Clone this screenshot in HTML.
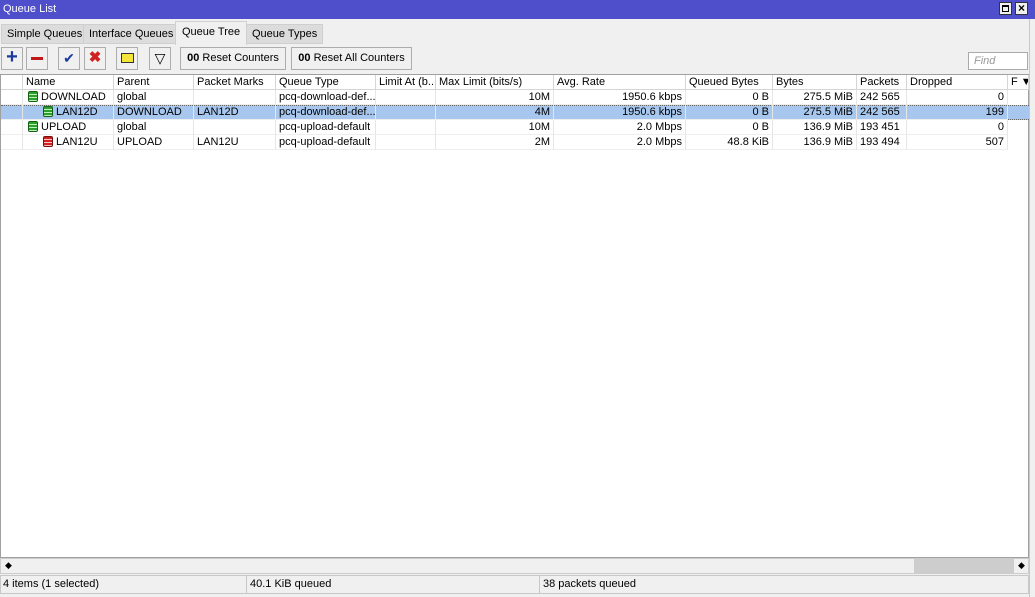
<!DOCTYPE html><html><head><style>
*{margin:0;padding:0;box-sizing:border-box}
body{width:1035px;height:597px;background:#f0f0f0;font-family:"Liberation Sans",sans-serif;font-size:11px;color:#000;position:relative;overflow:hidden}
.a{position:absolute}
.title{left:0;top:0;width:1035px;height:19px;background:#4f4fcb;color:#fff;font-size:11px;padding:3px 0 0 3px}
.wb{top:2px;width:13px;height:13px;background:#f0f0f0;border:1px solid #333}
.tab{top:24px;height:20px;background:#dcdcdc;border:1px solid #cfcfcf;padding:3px 5px 0 5px}
.btn{top:47px;height:23px;background:#f0f0f0;border:1px solid #adadad;text-align:center}
.grid{left:0;top:74px;width:1029px;height:484px;background:#fff;border:1px solid #a0a0a0}
.hd{top:0;height:15px;border-right:1px solid #d5d5d5;border-bottom:1px solid #d5d5d5;padding:1px 0 0 3px;background:#fff;white-space:nowrap;overflow:hidden}
.c{height:15px;padding:1px 3px 0 3px;white-space:nowrap;overflow:hidden;border-right:1px solid #e6e6e6;border-bottom:1px solid #eee}
.r{text-align:right}
.ic{display:inline-block;width:10px;height:11px;vertical-align:-2px;margin-right:3px;background:repeating-linear-gradient(#2aa02a 0 2px,#bff0bf 2px 3px);border:1px solid #156015;border-radius:2px}
.red{background:repeating-linear-gradient(#d02020 0 2px,#f8c0c0 2px 3px);border-color:#701010}
</style></head><body>
<div class="a title">Queue List</div>
<div class="a wb" style="left:999px"><div style="margin:2px;width:7px;height:7px;border:1px solid #000;border-top-width:2px"></div></div>
<div class="a wb" style="left:1015px;font-size:12px;font-weight:bold;line-height:11px;text-align:center">×</div>
<div class="a tab" style="left:1px">Simple Queues</div>
<div class="a tab" style="left:83px">Interface Queues</div>
<div class="a" style="left:175px;top:21px;height:24px;background:#f0f0f0;border:1px solid #d0d0d0;border-bottom:none;padding:4px 6px 0 6px">Queue Tree</div>
<div class="a tab" style="left:246px">Queue Types</div>
<div class="a btn" style="left:1px;width:22px;color:#1a3aa0;font-size:20px;font-weight:bold;line-height:19px">+</div>
<div class="a btn" style="left:26px;width:22px"><div style="margin:9px auto;width:12px;height:3px;background:#c01818"></div></div>
<div class="a btn" style="left:58px;width:22px;color:#1a3aa0;font-size:14px;line-height:20px">✔</div>
<div class="a btn" style="left:84px;width:22px;color:#d02020;font-size:15px;font-weight:bold;line-height:20px">✖</div>
<div class="a btn" style="left:116px;width:22px"><div style="margin:5px auto;width:13px;height:10px;background:#f5e43a;border:1px solid #333"></div></div>
<div class="a btn" style="left:149px;width:22px;font-size:14px;line-height:20px">▽</div>
<div class="a btn" style="left:180px;width:106px;line-height:20px"><b>00</b> Reset Counters</div>
<div class="a btn" style="left:291px;width:121px;line-height:20px"><b>00</b> Reset All Counters</div>
<div class="a" style="left:968px;top:52px;width:60px;height:18px;background:#fff;border:1px solid #aaa;color:#999;font-style:italic;padding:2px 0 0 5px">Find</div>
<div class="a grid">
<div class="a" style="left:0;top:30px;width:1028px;height:15px;background:#a7c7ee;border-top:1px dotted #666;border-bottom:1px dotted #666"></div>
<div class="a hd" style="left:0;width:22px"></div>
<div class="a hd" style="left:22px;width:91px">Name</div>
<div class="a hd" style="left:113px;width:80px">Parent</div>
<div class="a hd" style="left:193px;width:82px">Packet Marks</div>
<div class="a hd" style="left:275px;width:100px">Queue Type</div>
<div class="a hd" style="left:375px;width:60px">Limit At (b...</div>
<div class="a hd" style="left:435px;width:118px">Max Limit (bits/s)</div>
<div class="a hd" style="left:553px;width:132px">Avg. Rate</div>
<div class="a hd" style="left:685px;width:87px">Queued Bytes</div>
<div class="a hd" style="left:772px;width:84px">Bytes</div>
<div class="a hd" style="left:856px;width:50px">Packets</div>
<div class="a hd" style="left:906px;width:101px">Dropped</div>
<div class="a hd" style="left:1007px;width:21px">F ▼</div>
<div class="a" style="left:0;top:15px;width:1028px">
<div style="display:flex"><div class="c" style="width:22px"></div><div class="c" style="width:91px;padding-left:5px"><span class="ic"></span>DOWNLOAD</div><div class="c" style="width:80px">global</div><div class="c" style="width:82px"></div><div class="c" style="width:100px">pcq-download-def...</div><div class="c" style="width:60px"></div><div class="c r" style="width:118px">10M</div><div class="c r" style="width:132px">1950.6 kbps</div><div class="c r" style="width:87px">0 B</div><div class="c r" style="width:84px">275.5 MiB</div><div class="c" style="width:50px">242 565</div><div class="c r" style="width:101px">0</div></div>
<div style="display:flex"><div class="c" style="width:22px"></div><div class="c" style="width:91px;padding-left:20px"><span class="ic"></span>LAN12D</div><div class="c" style="width:80px">DOWNLOAD</div><div class="c" style="width:82px">LAN12D</div><div class="c" style="width:100px">pcq-download-def...</div><div class="c" style="width:60px"></div><div class="c r" style="width:118px">4M</div><div class="c r" style="width:132px">1950.6 kbps</div><div class="c r" style="width:87px">0 B</div><div class="c r" style="width:84px">275.5 MiB</div><div class="c" style="width:50px">242 565</div><div class="c r" style="width:101px">199</div></div>
<div style="display:flex"><div class="c" style="width:22px"></div><div class="c" style="width:91px;padding-left:5px"><span class="ic"></span>UPLOAD</div><div class="c" style="width:80px">global</div><div class="c" style="width:82px"></div><div class="c" style="width:100px">pcq-upload-default</div><div class="c" style="width:60px"></div><div class="c r" style="width:118px">10M</div><div class="c r" style="width:132px">2.0 Mbps</div><div class="c r" style="width:87px">0 B</div><div class="c r" style="width:84px">136.9 MiB</div><div class="c" style="width:50px">193 451</div><div class="c r" style="width:101px">0</div></div>
<div style="display:flex"><div class="c" style="width:22px"></div><div class="c" style="width:91px;padding-left:20px"><span class="ic red"></span>LAN12U</div><div class="c" style="width:80px">UPLOAD</div><div class="c" style="width:82px">LAN12U</div><div class="c" style="width:100px">pcq-upload-default</div><div class="c" style="width:60px"></div><div class="c r" style="width:118px">2M</div><div class="c r" style="width:132px">2.0 Mbps</div><div class="c r" style="width:87px">48.8 KiB</div><div class="c r" style="width:84px">136.9 MiB</div><div class="c" style="width:50px">193 494</div><div class="c r" style="width:101px">507</div></div>
</div>
</div>
<div class="a" style="left:0;top:558px;width:1029px;height:16px;background:#f0f0f0;border:1px solid #ccc"><div class="a" style="left:913px;top:0;width:100px;height:14px;background:#cdcdcd"></div><div class="a" style="left:4px;top:1px;font-size:9px">◆</div><div class="a" style="left:1017px;top:1px;font-size:9px">◆</div></div>
<div class="a" style="left:0;top:575px;width:1029px;height:19px;border:1px solid #c8c8c8;background:#f0f0f0"></div>
<div class="a" style="left:3px;top:578px">4 items (1 selected)</div>
<div class="a" style="left:246px;top:575px;height:19px;border-left:1px solid #c8c8c8;padding:3px 0 0 3px">40.1 KiB queued</div>
<div class="a" style="left:539px;top:575px;height:19px;border-left:1px solid #c8c8c8;padding:3px 0 0 3px">38 packets queued</div>
<div class="a" style="left:1029px;top:19px;width:6px;height:578px;background:#f0f0f0;border-left:1px solid #c8c8c8"></div>
</body></html>
